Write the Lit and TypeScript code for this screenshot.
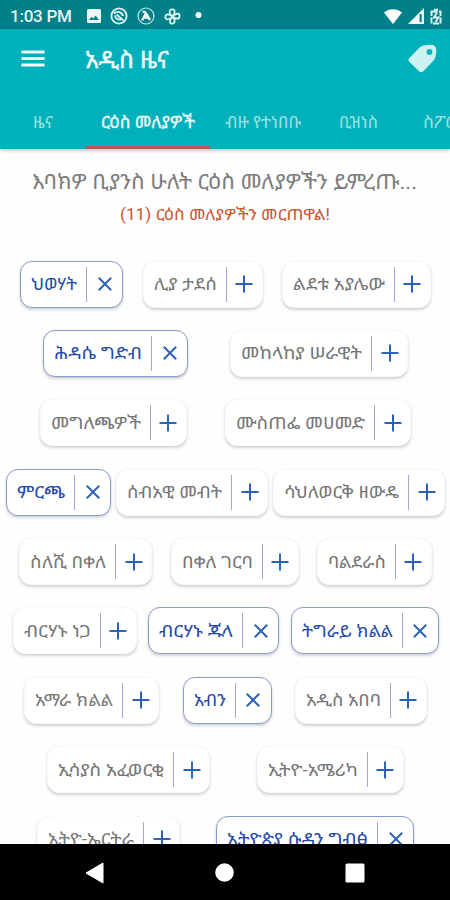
import { LitElement, html, css, svg } from "lit";
import { customElement, property } from "lit/decorators.js";

interface Topic {
  name: string;
  width: number;
  picked?: boolean;
}

const ROWS: Topic[][] = [
  [
    { name: "ህወሃት", width: 103, picked: true },
    { name: "ሊያ ታደሰ", width: 120 },
    { name: "ልደቱ አያሌው", width: 149 },
  ],
  [
    { name: "ሕዳሴ ግድብ", width: 145, picked: true },
    { name: "መከላከያ ሠራዊት", width: 178 },
  ],
  [
    { name: "መግለጫዎች", width: 147 },
    { name: "ሙስጠፌ መሀመድ", width: 186 },
  ],
  [
    { name: "ምርጫ", width: 105, picked: true },
    { name: "ሰብአዊ መብት", width: 152 },
    { name: "ሳህለወርቅ ዘውዴ", width: 172 },
  ],
  [
    { name: "ስለሺ በቀለ", width: 133 },
    { name: "በቀለ ገርባ", width: 128 },
    { name: "ባልደራስ", width: 115 },
  ],
  [
    { name: "ብርሃኑ ነጋ", width: 124 },
    { name: "ብርሃኑ ጁላ", width: 131, picked: true },
    { name: "ትግራይ ክልል", width: 148, picked: true },
  ],
  [
    { name: "አማራ ክልል", width: 135 },
    { name: "አብን", width: 89, picked: true },
    { name: "አዲስ አበባ", width: 132 },
  ],
  [
    { name: "ኢሳያስ አፈወርቂ", width: 163 },
    { name: "ኢትዮ-አሜሪካ", width: 147 },
  ],
  [
    { name: "ኢትዮ-ኤርትራ", width: 143 },
    { name: "ኢትዮጵያ ሱዳን ግብፅ", width: 198, picked: true },
  ],
];

@customElement("fit-text")
class FitText extends LitElement {
  @property() text = "";
  @property({ type: Number }) width = 0;
  @property({ type: Number }) size = 17;

  static styles = css`
    :host { display: block; flex: none; }
    svg { display: block; overflow: visible; }
    text { fill: currentColor; font-family: Roboto, "Noto Sans Ethiopic", "Noto Sans", sans-serif; }
  `;

  render() {
    const h = Math.round(this.size * 1.4);
    return html`<svg width=${this.width} height=${h}>
      ${svg`<text x="0" y=${this.size * 1.08} font-size=${this.size} textLength=${this.width} lengthAdjust="spacingAndGlyphs">${this.text}</text>`}
    </svg>`;
  }
}

@customElement("topic-chip")
class TopicChip extends LitElement {
  @property({ attribute: false }) topic!: Topic;

  static styles = css`
    :host { display: block; flex: none; }
    .chip {
      box-sizing: border-box; height: 47px; display: flex; align-items: center;
      border-radius: 12px; background: #fff; color: #757575; border: 1px solid #fafafa;
      box-shadow: 0 2px 3px rgba(0, 0, 0, 0.17), 0 0 2px rgba(0, 0, 0, 0.05);
      padding-left: 10px;
    }
    .picked { color: #2349a8; border-color: #8b9bd0; }
    .bar { width: 1px; height: 35px; background: #a5a6d2; margin-left: auto; flex: none; }
    .act { width: 35px; display: flex; justify-content: center; flex: none; }
    .act svg { display: block; stroke: #2e62b6; stroke-width: 2; fill: none; }
  `;

  render() {
    const t = this.topic;
    return html`<div class="chip ${t.picked ? "picked" : ""}" style="width:${t.width}px">
      <fit-text .text=${t.name} .width=${t.width - 57} .size=${17}></fit-text>
      <span class="bar"></span>
      <span class="act"><svg width="18" height="18" viewBox="0 0 18 18">
        ${t.picked ? svg`<path d="M2.800 2.800l12.400 12.400M15.200 2.800l-12.400 12.400"/>` : svg`<path d="M9 .5v17M.5 9h17"/>`}
      </svg></span>
    </div>`;
  }
}

@customElement("app-root")
class AppRoot extends LitElement {
  static styles = css`
    :host {
      display: flex; flex-direction: column; width: 450px; height: 900px; overflow: hidden;
      background: #fefefe; font-family: Roboto, sans-serif;
    }
    svg { display: block; flex: none; }
    .status { flex: none; height: 29px; background: #00818a; color: #e8f6f7; display: flex; align-items: center; padding: 3px 8px 0 10px; box-sizing: border-box; }
    .time { font-size: 17px; font-weight: 500; width: 77px; white-space: nowrap; letter-spacing: -0.25px; }
    .notes { display: flex; align-items: center; gap: 9px; }
    .signals { margin-left: auto; display: flex; align-items: center; gap: 6px; }
    .head { flex: none; height: 120px; background: #00b1bb; box-shadow: 0 1px 4px rgba(0, 0, 0, 0.3); z-index: 1; display: flex; flex-direction: column; justify-content: space-between; }
    .bar { height: 59px; display: flex; align-items: center; padding: 0 13px 0 21px; color: #f0fcfc; }
    .title { margin: 1px auto 0 40px; stroke: #f0fcfc; stroke-width: 0.4px; }
    .tabs { display: flex; height: 52px; color: #9be2e4; overflow: hidden; }
    .tab { flex: none; box-sizing: border-box; height: 52px; display: flex; justify-content: center; padding-top: 13px; border-bottom: 3px solid transparent; }
    .t1 { width: 86px; } .t2 { width: 124px; color: #f0fcfc; border-color: #b6594e; stroke: #f0fcfc; stroke-width: 0.3px; }
    .t3 { width: 106px; } .t4 { width: 85px; } .t5 { width: 90px; justify-content: flex-start; padding-left: 22px; }
    .main { flex: 1; min-height: 0; overflow: hidden; display: flex; flex-direction: column; }
    .ask { color: #7c7c7c; padding: 17px 0 0 32px; }
    .count { color: #d0532f; padding: 8px 0 0 120px; }
    .list { display: flex; flex-direction: column; gap: 22.4px; padding: 35.5px 0 0 1px; }
    .row { display: flex; justify-content: space-evenly; flex: none; }
    .nav { flex: none; height: 56px; background: #000; display: flex; align-items: center; justify-content: space-between; padding: 1px 85px 0 85px; box-sizing: border-box; }
  `;

  private label(text: string, width: number, size: number) {
    return html`<fit-text .text=${text} .width=${width} .size=${size}></fit-text>`;
  }

  render() {
    return html`
      <div class="status">
        <span class="time">1:03 PM</span>
        <div class="notes">
          <svg width="14" height="14" viewBox="0 0 14 14"><path fill="#eefafa" fill-rule="evenodd" d="M1.500 0h11A1.500 1.500 0 0 1 14 1.500v11a1.500 1.500 0 0 1-1.500 1.500h-11A1.500 1.500 0 0 1 0 12.500v-11A1.500 1.500 0 0 1 1.500 0zM2 11h10L8.700 6.500 6.200 9.600 4.500 7.700z"/></svg>
          <svg width="18" height="18" viewBox="0 0 18 18" fill="none" stroke="#dff4f4" stroke-width="1.800"><circle cx="9" cy="9" r="7.600"/><path d="M4 6.500C7 3.500 12.500 5 13 9M5 8.500c0 3 3.500 5 6.500 3.500M6.500 7.500l7 6"/></svg>
          <svg width="18" height="18" viewBox="0 0 18 18" fill="none" stroke="#c8eaea" stroke-width="1.200"><circle cx="9" cy="9" r="8"/><path stroke="#eefafa" stroke-width="2.400" d="M5.500 4.500l2.500 .5 5 8M9 6.500L5 13.500M7 10.500h4"/></svg>
          <svg width="17" height="17" viewBox="0 0 18 18" fill="none" stroke="#e4f6f6" stroke-width="1.800"><path d="M9 9C4 5 6 1 9 1.500S12 5 9 9C14 4 17 6 16.500 9S13 12 9 9c4 5 2 8-1 7.500S6 13 9 9C4 14 1 12 1.500 9S5 6 9 9z"/></svg>
          <svg width="18" height="8" viewBox="0 0 18 8"><circle cx="8.500" cy="3" r="3" fill="#f2fbfb"/></svg>
        </div>
        <div class="signals">
          <svg width="18" height="15" viewBox="0 0 18 15"><path fill="#fff" d="M0 3.500C5-1 13-1 18 3.500L9 15z"/></svg>
          <svg width="16" height="16" viewBox="0 0 16 16"><path fill="#f4fbfb" d="M0 16L16 0v16z"/><path fill="#0a8790" d="M11.500 6h2.300v8h-2.300z"/></svg>
          <svg width="12" height="17" viewBox="0 0 12 17" fill="none" stroke="#e2f5f5" stroke-width="1.900"><path stroke-dasharray="6 1.500" d="M1.500 3.500h9v12h-9z"/><path d="M4 1.800h4M7 4.500L4 9.500h4.500L5.500 14"/></svg>
        </div>
      </div>
      <div class="head">
        <div class="bar">
          <svg width="24" height="17" viewBox="0 0 24 17"><path fill="#eefbfb" d="M.5.500h23v3H.500zM.500 7h23v3H.500zM.500 13.500h23v3H.500z"/></svg>
          <span class="title">${this.label("አዲስ ዜና", 84, 24)}</span>
          <svg width="29" height="29" viewBox="0 0 29 29"><path fill="#cdf2f2" fill-rule="evenodd" d="M1.300 14L11.500 3.500C14 1 19.500.4 23.500.8c3 .3 4.500 2 4.700 4.700.4 4.500-.7 9-2.700 11L15.300 27.200c-1.300 1.300-3 1.300-4.300 0L1.300 17.800c-1.200-1.200-1.200-2.600 0-3.800zM21.500 5a2.900 2.900 0 1 0 0 5.800 2.900 2.900 0 0 0 0-5.800z"/></svg>
        </div>
        <div class="tabs">
          <div class="tab t1">${this.label("ዜና", 20, 17)}</div>
          <div class="tab t2">${this.label("ርዕስ መለያዎች", 94, 17)}</div>
          <div class="tab t3">${this.label("ብዙ የተነበቡ", 76, 17)}</div>
          <div class="tab t4">${this.label("ቢዝነስ", 39, 17)}</div>
          <div class="tab t5">${this.label("ስፖርት", 42, 17)}</div>
        </div>
      </div>
      <div class="main">
        <div class="ask">${this.label("እባክዎ ቢያንስ ሁለት ርዕስ መለያዎችን ይምረጡ...", 385, 21)}</div>
        <div class="count">${this.label("(11) ርዕስ መለያዎችን መርጠዋል!", 210, 16)}</div>
        <div class="list">
          ${ROWS.map((r) => html`<div class="row">${r.map((t) => html`<topic-chip .topic=${t}></topic-chip>`)}</div>`)}
        </div>
      </div>
      <div class="nav">
        <svg width="19" height="22" viewBox="0 0 19 22"><path fill="#fff" d="M18 1v20L1 11z" stroke="#fff" stroke-linejoin="round"/></svg>
        <svg width="19" height="19" viewBox="0 0 19 19"><circle cx="9.500" cy="9.500" r="9.300" fill="#fff"/></svg>
        <svg width="20" height="20" viewBox="0 0 20 20"><rect x=".5" y=".5" width="19" height="19" rx="1.500" fill="#fff"/></svg>
      </div>
    `;
  }
}
